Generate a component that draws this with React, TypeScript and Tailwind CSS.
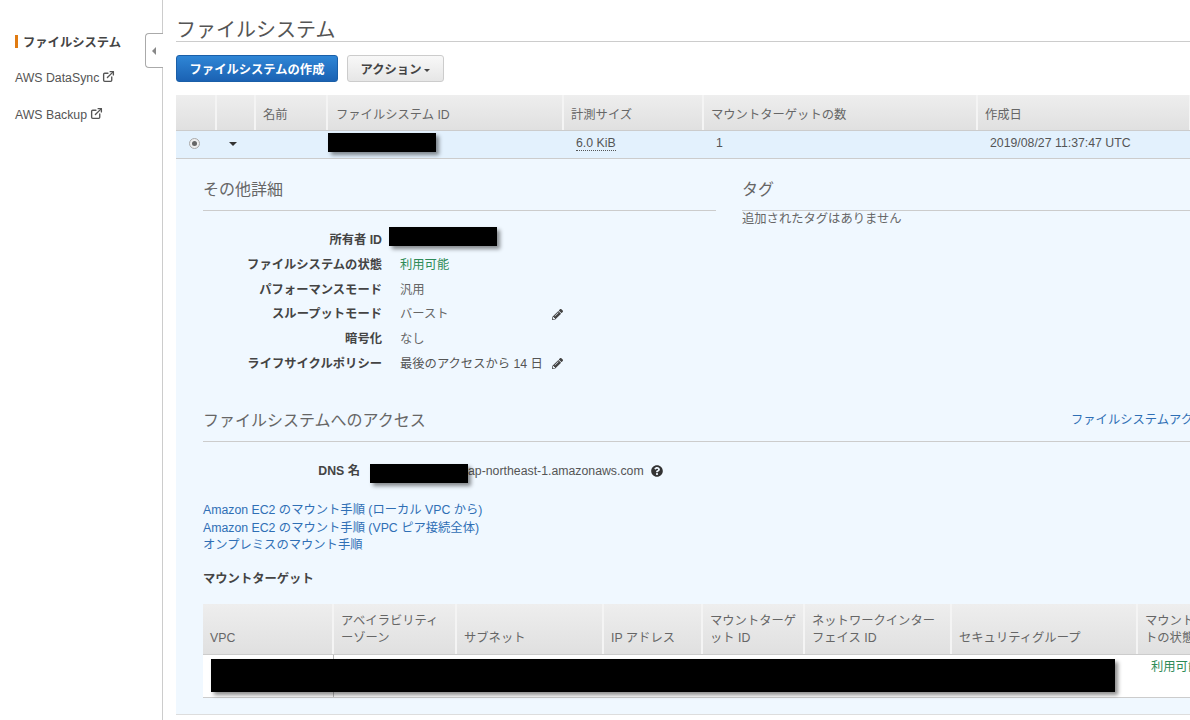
import { ExternalLink } from "lucide-react";
import { FaPencilAlt, FaQuestionCircle } from "react-icons/fa";

const font = {
  fontFamily: '"Liberation Sans", "Noto Sans CJK JP", sans-serif',
};

const columns = ["", "", "名前", "ファイルシステム ID", "計測サイズ", "マウントターゲットの数", "作成日"];

const mountColumns = [
  "VPC",
  "アベイラビリティーゾーン",
  "サブネット",
  "IP アドレス",
  "マウントターゲット ID",
  "ネットワークインターフェイス ID",
  "セキュリティグループ",
  "マウントターゲットの状態",
];

const details = [
  { label: "所有者 ID", value: "", color: "text-[#555]" },
  { label: "ファイルシステムの状態", value: "利用可能", color: "text-[#2e8b57]" },
  { label: "パフォーマンスモード", value: "汎用", color: "text-[#666]" },
  { label: "スループットモード", value: "バースト", color: "text-[#666]", edit: true },
  { label: "暗号化", value: "なし", color: "text-[#666]" },
  { label: "ライフサイクルポリシー", value: "最後のアクセスから 14 日", color: "text-[#555]", edit: true },
];

function Redacted({ className }: { className: string }) {
  return <div className={`absolute bg-black shadow-[3px_3px_4px_rgba(0,0,0,0.45)] ${className}`} />;
}

function SectionTitle({ children }: { children: React.ReactNode }) {
  return <h3 className="text-base leading-[21px] text-[#666]">{children}</h3>;
}

export default function App() {
  return (
    <div style={font} className="flex h-[720px] w-[1190px] overflow-hidden bg-white text-[12.3px] text-[#444]">
      {/* Sidebar */}
      <aside className="relative w-[163px] shrink-0 border-r border-[#ccc] pl-[15px] pt-[35px]">
        <div className="flex h-[13px] items-start border-l-[3px] border-[#e07b12] pl-[5px] font-bold leading-[16px] text-[#444]">
          ファイルシステム
        </div>
        <div className="mt-[23px] flex h-[14px] items-center gap-[3px] text-[#555]">
          AWS DataSync <ExternalLink size={13} strokeWidth={2.5} className="-mt-[3px]" />
        </div>
        <div className="mt-[23px] flex h-[14px] items-center gap-[3px] text-[#555]">
          AWS Backup <ExternalLink size={13} strokeWidth={2.5} className="-mt-[3px]" />
        </div>
        {/* Collapse tab */}
        <div className="absolute right-[-1px] top-[33px] flex h-[35px] w-[18px] items-center justify-start rounded-l-[4px] border border-r-0 border-[#aaa] bg-white pl-[6px]">
          <span className="h-0 w-0 border-y-[4px] border-r-[4px] border-y-transparent border-r-[#888]" />
        </div>
      </aside>

      {/* Main */}
      <main className="min-w-0 flex-1 overflow-hidden pl-[13px] pt-[15px]">
        <h1 className="h-[27px] border-b border-[#ccc] text-xl leading-[30px] text-[#555]">ファイルシステム</h1>

        <div className="mt-[13px] flex gap-[9px]">
          <button className="h-[27px] w-[162px] rounded-[3px] border border-[#1a5fa8] bg-gradient-to-b from-[#2f86d6] to-[#1b62b3] pt-[3px] font-bold text-white">
            ファイルシステムの作成
          </button>
          <button className="flex h-[27px] w-[97px] items-center justify-center gap-[3px] rounded-[3px] border border-[#ccc] bg-gradient-to-b from-[#f8f8f8] to-[#e6e6e6] pt-[3px] font-bold text-[#444]">
            アクション
            <span className="h-0 w-0 border-x-[3px] border-t-[3px] border-x-transparent border-t-[#444]" />
          </button>
        </div>

        {/* File systems table */}
        <div className="relative mt-[13px]">
          <div className="grid h-[36px] grid-cols-[41px_39px_72px_236px_140px_274px_213px] border-b border-[#ccc] bg-gradient-to-b from-[#eeeeee] to-[#e0e0e0] text-[#666]">
            {columns.map((c, i) => (
              <div
                key={i}
                className={`flex items-center border-r-2 border-[#f4f4f4] pt-[5px] ${i === 3 ? "pl-2" : "pl-[7px]"}`}
              >
                {c}
              </div>
            ))}
          </div>
          <div className="grid h-[28px] grid-cols-[41px_39px_72px_236px_140px_274px_213px] items-center border-b border-[#ccc] bg-[#e3f1fd] pb-[2px] text-[#555]">
            <div className="pl-[13px]">
              <span className="flex h-[11px] w-[11px] items-center justify-center rounded-full border border-[#aaa] bg-[#eee]">
                <span className="h-[5px] w-[5px] rounded-full bg-[#666]" />
              </span>
            </div>
            <div className="pl-[12px]">
              <span className="block h-0 w-0 border-x-[4px] border-t-[4px] border-x-transparent border-t-[#333]" />
            </div>
            <div />
            <div />
            <div className="pl-[12px]">
              <span className="border-b border-dotted border-[#555]">6.0 KiB</span>
            </div>
            <div className="pl-[12px]">1</div>
            <div className="pl-[12px]">2019/08/27 11:37:47 UTC</div>
          </div>
          <Redacted className="left-[152px] top-[38px] h-[19px] w-[108px]" />
        </div>

        {/* Detail panel */}
        <section className="relative h-[556px] overflow-hidden border-b border-[#ddd] bg-[#f0f8ff] pl-[27px] pt-[20px]">
          <div className="flex gap-[26px]">
            <div className="w-[513px] shrink-0">
              <div className="border-b border-[#ccc] pb-[10px]">
                <SectionTitle>その他詳細</SectionTitle>
              </div>
              <div className="mt-[17px] flex flex-col">
                {details.map((d) => (
                  <div key={d.label} className="flex h-[24.7px] items-center">
                    <div className="w-[179px] text-right font-bold text-[#444]">{d.label}</div>
                    <div className={`ml-[18px] flex items-center ${d.color}`}>
                      <span className={d.edit ? "w-[152px]" : ""}>{d.value}</span>
                      {d.edit && <FaPencilAlt size={11} className="text-[#444]" />}
                    </div>
                  </div>
                ))}
              </div>
            </div>
            <div className="flex-1">
              <div className="border-b border-[#ccc] pb-[10px]">
                <SectionTitle>タグ</SectionTitle>
              </div>
              <p className="leading-[16px] text-[#666]">追加されたタグはありません</p>
            </div>
          </div>
          <Redacted className="left-[213px] top-[68px] h-[19px] w-[108px]" />

          {/* Access */}
          <div className="mt-[34px] flex h-[32px] items-start border-b border-[#ccc]">
            <div className="w-[868px] shrink-0">
              <SectionTitle>ファイルシステムへのアクセス</SectionTitle>
            </div>
            <a className="whitespace-nowrap leading-[21px] text-[#2f6fb5]">ファイルシステムアクセスの管理</a>
          </div>

          <div className="mt-[21px] flex h-[16px] items-center">
            <div className="w-[157px] text-right font-bold text-[#444]">DNS 名</div>
            <div className="ml-[108px] text-[#555]">ap-northeast-1.amazonaws.com</div>
            <FaQuestionCircle size={12} className="ml-[7px] text-[#333]" />
          </div>
          <Redacted className="left-[194px] top-[305px] h-[19px] w-[98px]" />

          <div className="mt-[23px] flex flex-col leading-[17.5px] text-[#2f6fb5]">
            <a>Amazon EC2 のマウント手順 (ローカル VPC から)</a>
            <a>Amazon EC2 のマウント手順 (VPC ピア接続全体)</a>
            <a>オンプレミスのマウント手順</a>
          </div>

          <h4 className="mt-[16px] font-bold leading-[16px] text-[#444]">マウントターゲット</h4>

          {/* Mount targets table */}
          <div className="mt-[17px] w-[1100px]">
            <div className="grid h-[51px] grid-cols-[131px_123px_147px_99px_102px_147px_186px_116px] border-b border-[#ccc] bg-gradient-to-b from-[#eeeeee] to-[#e0e0e0] text-[#666]">
              {mountColumns.map((c) => (
                <div key={c} className="flex items-end border-r-2 border-[#f4f4f4] pb-[6px] pl-[7px] pr-[6px] leading-[17.5px]">
                  <span className="break-all">{c}</span>
                </div>
              ))}
            </div>
            <div className="grid h-[43px] grid-cols-[131px_123px_147px_99px_102px_147px_186px_116px] border-b border-[#ccc] bg-white">
              <div className="border-r border-[#bbb]" />
              <div className="col-span-6" />
              <div className="pl-[13px] pt-[3px] text-[#2e8b57]">利用可能</div>
            </div>
          </div>
          <Redacted className="left-[35px] top-[500px] h-[33px] w-[904px]" />
        </section>
      </main>
    </div>
  );
}
